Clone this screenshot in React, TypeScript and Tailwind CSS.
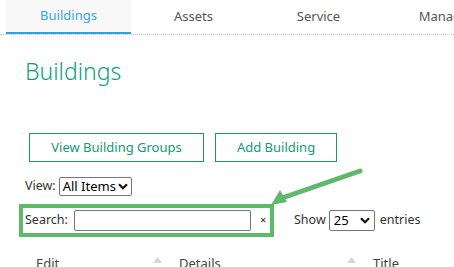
import React from "react";

const font = { fontFamily: '"Segoe UI", "Noto Sans", sans-serif' };

function Chevron() {
  return (
    <svg width="10" height="7" viewBox="0 0 10 7" className="shrink-0">
      <path d="M1 1.2 L5 5.2 L9 1.2" fill="none" stroke="#111" strokeWidth="2.2" />
    </svg>
  );
}

function SortUp() {
  return (
    <svg width="9" height="6" viewBox="0 0 9 6">
      <path d="M0 6 L4.5 0 L9 6 Z" fill="#d8d8d8" />
    </svg>
  );
}

export default function App() {
  const tabs = ["Buildings", "Assets", "Service", "Manage"];
  return (
    <div className="relative w-[454px] h-[267px] overflow-hidden bg-white whitespace-nowrap" style={font}>
      <nav className="flex pl-[6px] border-b border-dotted border-[#c8c8c8] h-[35px]">
        {tabs.map((t, i) => (
          <div
            key={t}
            className={
              i === 0
                ? "w-[125px] shrink-0 h-[34px] flex items-center justify-center bg-[#f8f8f8] border-b-2 border-[#1ea4f2] text-[13px] text-[#3ba1f2]"
                : "w-[125px] shrink-0 h-[34px] flex items-center justify-center text-[13px] text-[#555]"
            }
          >
            {t}
          </div>
        ))}
      </nav>

      <h1 className="pl-[25px] mt-[20px] text-[23px] leading-[32px] font-light text-[#0f9f80]">Buildings</h1>

      <div className="flex gap-[11px] pl-[29px] mt-[46px]">
        <button className="w-[175px] h-[29px] border border-[#13a05a] text-[13px] text-[#139a76] flex items-center justify-center">
          View Building Groups
        </button>
        <button className="w-[122px] h-[29px] border border-[#13a05a] text-[13px] text-[#139a76] flex items-center justify-center">
          Add Building
        </button>
      </div>

      <div className="flex items-center pl-[25px] mt-[15px] text-[12.5px] text-[#333]">
        <span>View:</span>
        <div className="ml-[3px] w-[73px] h-[19px] border border-[#767676] rounded-[2px] flex items-center justify-between pl-[3px] pr-[3px] text-[13px] text-black">
          <span>All Items</span>
          <Chevron />
        </div>
      </div>

      <div className="flex items-center mt-[8px] text-[12.5px] text-[#333]">
        <div className="ml-[19px] w-[255px] h-[33px] border-[4px] border-[#5fb96b] flex items-center pl-[2px]">
          <span>Search:</span>
          <div className="ml-[6px] w-[177px] h-[21px] border border-[#767676] rounded-[2px]" />
          <span className="ml-[9px] text-[11px] text-[#222]">×</span>
        </div>
        <span className="ml-[20px]">Show</span>
        <div className="ml-[3px] w-[46px] h-[21px] border border-[#767676] rounded-[2px] flex items-center justify-between pl-[4px] pr-[4px] text-[13px] text-black">
          <span>25</span>
          <Chevron />
        </div>
        <span className="ml-[5px]">entries</span>
      </div>

      <div className="flex items-start mt-[17px] text-[13px] text-[#444]">
        <div className="w-[170px] shrink-0 flex justify-between pl-[36px] pr-[8px]">
          <span>Edit</span>
          <span className="pt-[3px]"><SortUp /></span>
        </div>
        <div className="w-[194px] shrink-0 flex justify-between pl-[9px] pr-[8px]">
          <span>Details</span>
          <span className="pt-[3px]"><SortUp /></span>
        </div>
        <div className="pl-[9px]">
          <span>Title</span>
        </div>
      </div>

      <svg className="absolute left-0 top-0 pointer-events-none" width="454" height="267" viewBox="0 0 454 267">
        <line x1="360" y1="171" x2="282" y2="198" stroke="#5fb96b" strokeWidth="5" strokeLinecap="round" />
        <path d="M271 205 L280 190 L287 202 Z" fill="#5fb96b" />
      </svg>
    </div>
  );
}
